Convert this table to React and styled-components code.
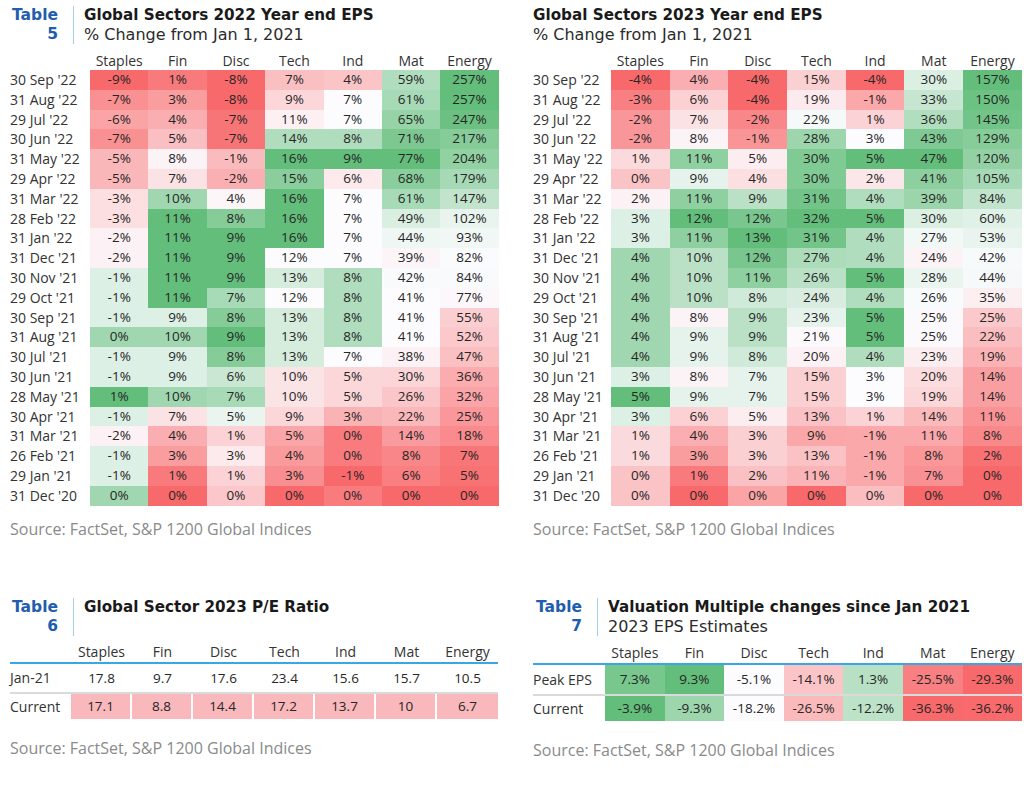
import React from "react";
import styled, { createGlobalStyle } from "styled-components";

const GlobalStyle = createGlobalStyle`
  html, body {
    margin: 0;
    padding: 0;
    background: #ffffff;
  }
  body {
    font-family: "Open Sans", "Liberation Sans", sans-serif;
    color: #262626;
  }
`;

const SECTORS = ["Staples", "Fin", "Disc", "Tech", "Ind", "Mat", "Energy"];

// values are % change, in the same order as SECTORS
const EPS_2022 = [
  ["30 Sep '22", [-9, 1, -8, 7, 4, 59, 257]],
  ["31 Aug '22", [-7, 3, -8, 9, 7, 61, 257]],
  ["29 Jul '22", [-6, 4, -7, 11, 7, 65, 247]],
  ["30 Jun '22", [-7, 5, -7, 14, 8, 71, 217]],
  ["31 May '22", [-5, 8, -1, 16, 9, 77, 204]],
  ["29 Apr '22", [-5, 7, -2, 15, 6, 68, 179]],
  ["31 Mar '22", [-3, 10, 4, 16, 7, 61, 147]],
  ["28 Feb '22", [-3, 11, 8, 16, 7, 49, 102]],
  ["31 Jan '22", [-2, 11, 9, 16, 7, 44, 93]],
  ["31 Dec '21", [-2, 11, 9, 12, 7, 39, 82]],
  ["30 Nov '21", [-1, 11, 9, 13, 8, 42, 84]],
  ["29 Oct '21", [-1, 11, 7, 12, 8, 41, 77]],
  ["30 Sep '21", [-1, 9, 8, 13, 8, 41, 55]],
  ["31 Aug '21", [0, 10, 9, 13, 8, 41, 52]],
  ["30 Jul '21", [-1, 9, 8, 13, 7, 38, 47]],
  ["30 Jun '21", [-1, 9, 6, 10, 5, 30, 36]],
  ["28 May '21", [1, 10, 7, 10, 5, 26, 32]],
  ["30 Apr '21", [-1, 7, 5, 9, 3, 22, 25]],
  ["31 Mar '21", [-2, 4, 1, 5, 0, 14, 18]],
  ["26 Feb '21", [-1, 3, 3, 4, 0, 8, 7]],
  ["29 Jan '21", [-1, 1, 1, 3, -1, 6, 5]],
  ["31 Dec '20", [0, 0, 0, 0, 0, 0, 0]],
];

const EPS_2023 = [
  ["30 Sep '22", [-4, 4, -4, 15, -4, 30, 157]],
  ["31 Aug '22", [-3, 6, -4, 19, -1, 33, 150]],
  ["29 Jul '22", [-2, 7, -2, 22, 1, 36, 145]],
  ["30 Jun '22", [-2, 8, -1, 28, 3, 43, 129]],
  ["31 May '22", [1, 11, 5, 30, 5, 47, 120]],
  ["29 Apr '22", [0, 9, 4, 30, 2, 41, 105]],
  ["31 Mar '22", [2, 11, 9, 31, 4, 39, 84]],
  ["28 Feb '22", [3, 12, 12, 32, 5, 30, 60]],
  ["31 Jan '22", [3, 11, 13, 31, 4, 27, 53]],
  ["31 Dec '21", [4, 10, 12, 27, 4, 24, 42]],
  ["30 Nov '21", [4, 10, 11, 26, 5, 28, 44]],
  ["29 Oct '21", [4, 10, 8, 24, 4, 26, 35]],
  ["30 Sep '21", [4, 8, 9, 23, 5, 25, 25]],
  ["31 Aug '21", [4, 9, 9, 21, 5, 25, 22]],
  ["30 Jul '21", [4, 9, 8, 20, 4, 23, 19]],
  ["30 Jun '21", [3, 8, 7, 15, 3, 20, 14]],
  ["28 May '21", [5, 9, 7, 15, 3, 19, 14]],
  ["30 Apr '21", [3, 6, 5, 13, 1, 14, 11]],
  ["31 Mar '21", [1, 4, 3, 9, -1, 11, 8]],
  ["26 Feb '21", [1, 3, 3, 13, -1, 8, 2]],
  ["29 Jan '21", [0, 1, 2, 11, -1, 7, 0]],
  ["31 Dec '20", [0, 0, 0, 0, 0, 0, 0]],
];

const PE_RATIO = [
  ["Jan-21", [17.8, 9.7, 17.6, 23.4, 15.6, 15.7, 10.5]],
  ["Current", [17.1, 8.8, 14.4, 17.2, 13.7, 10, 6.7]],
];

const MULTIPLES = [
  ["Peak EPS", [7.3, 9.3, -5.1, -14.1, 1.3, -25.5, -29.3]],
  ["Current", [-3.9, -9.3, -18.2, -26.5, -12.2, -36.3, -36.2]],
];

// excel style 3-colour scale: min red, 50th percentile white, max green
const RED = [248, 105, 107];
const WHITE = [252, 252, 255];
const GREEN = [99, 190, 123];

const mix = (a, b, t) =>
  `rgb(${a.map((c, i) => Math.round(c + (b[i] - c) * t)).join(",")})`;

const makeScale = (vals) => {
  const sorted = [...vals].sort((a, b) => a - b);
  const min = sorted[0];
  const max = sorted[sorted.length - 1];
  const pos = (sorted.length - 1) * 0.5;
  const lo = Math.floor(pos);
  const hi = Math.ceil(pos);
  const mid = sorted[lo] + (sorted[hi] - sorted[lo]) * (pos - lo);
  return (v) => {
    if (v <= mid) {
      const t = mid === min ? 1 : (v - min) / (mid - min);
      return mix(RED, WHITE, t);
    }
    const t = max === mid ? 0 : (v - mid) / (max - mid);
    return mix(WHITE, GREEN, t);
  };
};

const columnScales = (rows) =>
  SECTORS.map((_, c) => makeScale(rows.map(([, vals]) => vals[c])));

const Page = styled.div`
  display: grid;
  grid-template-columns: 512px 512px;
  grid-template-rows: 590px auto;
  width: 1024px;
`;

const Panel = styled.section`
  padding: ${(p) => (p.$bottom ? "8px" : "6px")} 0 0
    ${(p) => (p.$right ? "21px" : "10px")};
`;

const Heading = styled.div`
  display: flex;
  align-items: stretch;
  height: 38px;
`;

const TableTag = styled.div`
  width: ${(p) => p.$width}px;
  text-align: right;
  color: #1f5daf;
  font-family: "DejaVu Sans", "Open Sans", sans-serif;
  font-weight: 700;
  font-size: 15.5px;
  line-height: 19px;
  padding-right: ${(p) => p.$gap}px;
  border-right: 1.5px solid #9fd0ef;
  margin-right: 10px;
  span {
    display: block;
  }
`;

const Titles = styled.div`
  display: flex;
  flex-direction: column;
  line-height: 19px;
  font-family: "DejaVu Sans", "Open Sans", sans-serif;
  color: #1a1a1a;
`;

const Title = styled.div`
  font-weight: 700;
  font-size: 15.2px;
`;

const Subtitle = styled.div`
  font-weight: 400;
  font-size: 16px;
  color: #2b2b2b;
`;

const Grid = styled.div`
  display: grid;
  grid-template-columns: ${(p) => p.$label}px repeat(7, ${(p) => p.$col}px);
  margin-top: ${(p) => p.$top}px;
  font-size: 13.5px;
`;

const ColHead = styled.div`
  height: ${(p) => p.$h}px;
  line-height: ${(p) => p.$h}px;
  text-align: center;
  color: #333;
  font-size: 14px;
`;

const RowLabel = styled.div`
  height: ${(p) => p.$h}px;
  line-height: ${(p) => p.$h}px;
  color: #333;
  font-size: 14px;
  white-space: nowrap;
`;

const Cell = styled.div`
  height: ${(p) => p.$h}px;
  line-height: ${(p) => p.$h}px;
  text-align: center;
  color: #262626;
  background: ${(p) => p.$bg || "transparent"};
  border-right: ${(p) => (p.$split ? "2px solid #fff" : "none")};
`;

const Rule = styled.div`
  grid-column: 1 / -1;
  height: 2px;
  background: ${(p) => (p.$blue ? "#3aa6e6" : "#dadada")};
`;

const Source = styled.div`
  margin-top: ${(p) => p.$top}px;
  font-size: 16px;
  line-height: 18px;
  color: #8a8a8a;
`;

const Header = ({ num, title, subtitle, tagWidth, gap }) => (
  <Heading>
    <TableTag $width={tagWidth} $gap={gap}>
      <span>Table</span>
      <span>{num}</span>
    </TableTag>
    <Titles>
      <Title>{title}</Title>
      {subtitle && <Subtitle>{subtitle}</Subtitle>}
    </Titles>
  </Heading>
);

const HeatTable = ({ rows, label, col }) => {
  const scales = columnScales(rows);
  return (
    <Grid $label={label} $col={col} $top={7}>
      <div />
      {SECTORS.map((s) => (
        <ColHead key={s} $h={19}>
          {s}
        </ColHead>
      ))}
      {rows.map(([date, vals]) => (
        <React.Fragment key={date}>
          <RowLabel $h={19.8}>{date}</RowLabel>
          {vals.map((v, i) => (
            <Cell key={i} $h={19.8} $bg={scales[i](v)}>
              {v}%
            </Cell>
          ))}
        </React.Fragment>
      ))}
    </Grid>
  );
};

const RatioTable = () => (
  <Grid $label={61} $col={61} $top={6}>
    <div />
    {SECTORS.map((s) => (
      <ColHead key={s} $h={20}>
        {s}
      </ColHead>
    ))}
    <Rule $blue />
    <RowLabel $h={28}>{PE_RATIO[0][0]}</RowLabel>
    {PE_RATIO[0][1].map((v, i) => (
      <Cell key={i} $h={28}>
        {v}
      </Cell>
    ))}
    <Rule />
    <RowLabel $h={25}>{PE_RATIO[1][0]}</RowLabel>
    {PE_RATIO[1][1].map((v, i) => (
      <Cell key={i} $h={25} $bg="#f9b8bb" $split={i < 6}>
        {v}
      </Cell>
    ))}
  </Grid>
);

const MultipleTable = () => (
  <Grid $label={72} $col={59.6} $top={6}>
    <div />
    {SECTORS.map((s) => (
      <ColHead key={s} $h={21}>
        {s}
      </ColHead>
    ))}
    <Rule $blue />
    {MULTIPLES.map(([name, vals], r) => {
      const scale = makeScale(vals);
      return (
        <React.Fragment key={name}>
          {r > 0 && <Rule />}
          <RowLabel $h={r === 0 ? 29 : 25}>{name}</RowLabel>
          {vals.map((v, i) => (
            <Cell key={i} $h={r === 0 ? 29 : 25} $bg={scale(v)}>
              {v.toFixed(1)}%
            </Cell>
          ))}
        </React.Fragment>
      );
    })}
  </Grid>
);

const SOURCE = "Source: FactSet, S&P 1200 Global Indices";

export default function App() {
  return (
    <>
      <GlobalStyle />
      <Page>
        <Panel>
          <Header
            num="5"
            title="Global Sectors 2022 Year end EPS"
            subtitle="% Change from Jan 1, 2021"
            tagWidth={48}
            gap={15}
          />
          <HeatTable rows={EPS_2022} label={80} col={58.4} />
          <Source $top={14}>{SOURCE}</Source>
        </Panel>
        <Panel $right>
          <Titles>
            <Title>Global Sectors 2023 Year end EPS</Title>
            <Subtitle>% Change from Jan 1, 2021</Subtitle>
          </Titles>
          <HeatTable rows={EPS_2023} label={78} col={58.7} />
          <Source $top={14}>{SOURCE}</Source>
        </Panel>
        <Panel $bottom>
          <Header
            num="6"
            title="Global Sector 2023 P/E Ratio"
            tagWidth={48}
            gap={15}
          />
          <RatioTable />
          <Source $top={20}>{SOURCE}</Source>
        </Panel>
        <Panel $bottom $right>
          <Header
            num="7"
            title="Valuation Multiple changes since Jan 2021"
            subtitle="2023 EPS Estimates"
            tagWidth={49}
            gap={15}
          />
          <MultipleTable />
          <Source $top={20}>{SOURCE}</Source>
        </Panel>
      </Page>
    </>
  );
}
